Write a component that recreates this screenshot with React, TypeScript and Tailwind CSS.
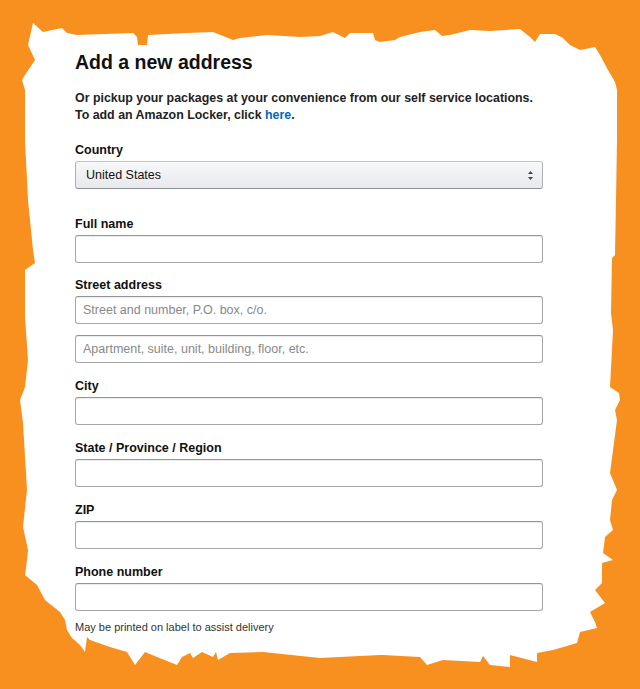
// Address form on a torn-paper card
const paper =
  "33,23 43,32 62,28 67,33 77,35 133,33 137,37 138,45 147,45 148,35 187,33 213,32 233,40 240,38 267,35 300,37 320,36 " +
  "333,32 345,38 350,33 373,33 375,40 380,42 395,40 400,37 420,32 435,30 442,36 450,35 470,30 490,31 520,29 530,37 " +
  "535,42 540,34 555,34 563,38 570,45 580,50 595,47 600,55 608,70 615,82 617,90 617,140 616,200 615,255 612,258 " +
  "611,313 613,330 610,387 619,393 620,400 615,410 617,420 610,473 617,490 612,500 610,520 613,530 605,537 603,553 " +
  "613,560 602,563 602,583 595,590 605,603 590,612 595,622 597,628 580,632 577,643 553,650 537,653 537,662 510,655 " +
  "510,667 490,665 483,656 480,662 443,660 427,665 420,657 383,655 380,655 320,658 263,652 230,653 218,660 216,652 " +
  "213,657 202,652 193,658 190,653 182,657 177,665 157,657 145,652 135,665 127,652 110,647 90,640 87,637 85,652 " +
  "80,645 72,638 67,630 65,620 60,612 45,600 37,585 25,575 27,560 28,550 23,527 27,490 23,423 20,400 25,387 28,360 " +
  "25,317 25,270 35,263 33,250 28,200 25,140 25,90 22,80 25,75 35,60 28,45";

const fields = [
  { label: "Full name", mb: "mb-[14px]" },
  { label: "Street address", placeholders: ["Street and number, P.O. box, c/o.", "Apartment, suite, unit, building, floor, etc."] },
  { label: "City" },
  { label: "State / Province / Region" },
  { label: "ZIP" },
  { label: "Phone number", mb: "mb-0" },
];

const inputCls =
  "block w-[468px] h-[28px] rounded-[3px] border border-[#a6a6a6] border-t-[#949494] bg-white px-[7px] text-[12.5px] text-[#111] placeholder:text-[#888] shadow-[inset_0_1px_0_rgba(0,0,0,0.07)] outline-none";

export default function App() {
  return (
    <main className="relative w-[640px] h-[689px] overflow-hidden bg-[#f7901e] font-['Liberation_Sans',Arial,sans-serif] text-[#111]">
      <svg className="absolute inset-0" width="640" height="689" viewBox="0 0 640 689">
        <polygon points={paper} fill="#ffffff" />
      </svg>

      <div className="relative flex flex-col pl-[75px] pt-[50px]">
        <h1 className="text-[19.5px] leading-[24px] font-bold">Add a new address</h1>
        <p className="mt-[16px] text-[12.4px] leading-[17px] font-bold text-[#222]">
          Or pickup your packages at your convenience from our self service locations.
          <br />
          To add an Amazon Locker, click <a className="text-[#0066c0]">here</a>.
        </p>

        <label className="mt-[18px] mb-[3px] text-[12.5px] leading-[16px] font-bold">Country</label>
        <div className="mb-[27px] flex w-[468px] h-[28px] items-center justify-between rounded-[3px] border border-[#adb1b8] border-t-[#c0c3c8] border-b-[#8d9096] bg-gradient-to-b from-[#f7f8fa] to-[#e7e9ec] pl-[10px] pr-[9px] shadow-[0_1px_0_rgba(255,255,255,0.6)_inset]">
          <span className="text-[12.5px]">United States</span>
          <svg width="5" height="9" viewBox="0 0 5 9">
            <path d="M2.5 0 L5 3 L0 3 Z M0 6 L5 6 L2.5 9 Z" fill="#444" />
          </svg>
        </div>

        {fields.map((f) => (
          <div key={f.label} className={`flex flex-col ${f.mb ?? "mb-[15px]"}`}>
            <label className="mb-[3px] text-[12.5px] leading-[16px] font-bold">{f.label}</label>
            {f.placeholders ? (
              <div className="flex flex-col gap-[11px]">
                {f.placeholders.map((p) => (
                  <input key={p} className={inputCls} placeholder={p} />
                ))}
              </div>
            ) : (
              <input className={inputCls} />
            )}
          </div>
        ))}

        <p className="mt-[9px] text-[11px] leading-[14px] text-[#333]">May be printed on label to assist delivery</p>
      </div>
    </main>
  );
}
